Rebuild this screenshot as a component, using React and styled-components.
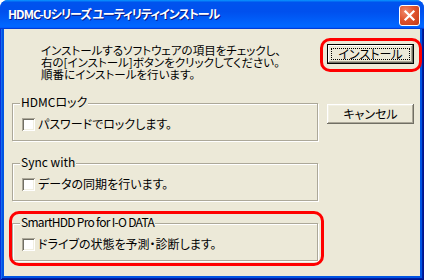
import React from "react";
import styled, { createGlobalStyle, css } from "styled-components";

const GlobalStyle = createGlobalStyle`
  html, body { margin: 0; padding: 0; background: #ffffff; }
  body { font-family: "Noto Sans CJK JP", "Noto Sans", sans-serif; }
`;

const uiFont = css`
  font-family: "Noto Sans CJK JP", "Noto Sans", sans-serif;
  font-size: 12px;
  line-height: 12px;
  font-feature-settings: "palt";
  color: #000;
`;

const Window = styled.div`
  width: 424px;
  height: 280px;
  display: flex;
  flex-direction: column;
  border-radius: 8px 8px 0 0;
  overflow: hidden;
  background: #0054e3;
`;

const TitleBar = styled.div`
  height: 29px;
  box-sizing: border-box;
  padding: 2px 4px 0 8px;
  display: flex;
  align-items: center;
  justify-content: space-between;
  background: linear-gradient(
    180deg,
    #0997ff,
    #0053ee 8%,
    #0050ee 40%,
    #0066ff 88%,
    #0066ff 93%,
    #005bff 95%,
    #003dd7 96%,
    #003dd7
  );
`;

const Title = styled.span`
  font-family: "Noto Sans CJK JP", sans-serif;
  font-weight: 700;
  font-size: 12px;
  line-height: 14px;
  letter-spacing: -1px;
  font-feature-settings: "palt";
  color: #fff;
  text-shadow: 1px 1px 0 #0a1883;
  margin-top: -3px;
`;

const CloseButton = styled.div`
  width: 21px;
  height: 21px;
  box-sizing: border-box;
  border: 1px solid #fff;
  border-radius: 3px;
  display: flex;
  align-items: center;
  justify-content: center;
  background: radial-gradient(circle at 30% 30%, #f08a6c 0%, #e0542f 45%, #c23a15 100%);
`;

const Frame = styled.div`
  flex: 1;
  display: flex;
  padding: 0 4px 4px;
  background: #0054e3;
  box-shadow: inset 1px 0 #0831d9, inset -1px -1px #00138c, inset 2px 0 #166aee, inset -2px -2px #001ea0;
`;

const Client = styled.div`
  flex: 1;
  display: flex;
  gap: 9px;
  padding-left: 8px;
  background: #ece9d8;
`;

const LeftColumn = styled.div`
  width: 306px;
  display: flex;
  flex-direction: column;
  gap: 22px;
  padding-top: 15px;
`;

const Description = styled.div`
  ${uiFont};
  font-size: 11.5px;
  margin-left: 29px;
  margin-bottom: 1px;
  display: flex;
  flex-direction: column;
  white-space: nowrap;
`;

const GroupBox = styled.div`
  position: relative;
  height: 38px;
  box-sizing: border-box;
  border: 1px solid #aca899;
  box-shadow: 1px 1px 0 #fff, inset 1px 1px 0 #fff;
  padding: 14px 0 0 9px;
  display: flex;
  align-items: flex-start;
`;

const Legend = styled.span`
  ${uiFont};
  position: absolute;
  top: -8px;
  left: 7px;
  padding: 0 1px;
  background: #ece9d8;
  white-space: nowrap;
  letter-spacing: ${(p) => (p.$tight ? "-0.7px" : "0")};
`;

const CheckRow = styled.label`
  display: flex;
  align-items: center;
  gap: 3px;
  ${uiFont};
  white-space: nowrap;
`;

const CheckBox = styled.span`
  width: 13px;
  height: 13px;
  flex: none;
  box-sizing: border-box;
  background: #fff;
  box-shadow: inset 1px 1px #aca899, inset -1px -1px #fff, inset 2px 2px #716f64, inset -2px -2px #f1efe2;
`;

const CheckText = styled.span`
  margin-top: -1px;
`;

const RightColumn = styled.div`
  display: flex;
  flex-direction: column;
  gap: 40px;
  padding-top: 15px;
`;

const Highlight = styled.div`
  position: relative;
  &::after {
    content: "";
    position: absolute;
    inset: ${(p) => p.$inset};
    border: 3px solid #ff0000;
    border-radius: 10px;
    pointer-events: none;
  }
`;

const Button = styled.button`
  position: relative;
  width: 87px;
  height: 20px;
  box-sizing: border-box;
  padding: 0;
  border: none;
  background: #ece9d8;
  ${uiFont};
  display: flex;
  align-items: center;
  justify-content: center;
  box-shadow: inset -1px -1px #716f64, inset 1px 1px #fff, inset -2px -2px #aca899, inset 2px 2px #f1efe2;
  ${(p) =>
    p.$default &&
    css`
      box-shadow: inset 0 0 0 1px #000, inset -2px -2px #716f64, inset 2px 2px #fff, inset -3px -3px #aca899;
      &::before {
        content: "";
        position: absolute;
        inset: 4px;
        border: 1px dotted #000;
      }
    `}
`;

const descriptionLines = [
  "インストールするソフトウェアの項目をチェックし、",
  "右の[インストール]ボタンをクリックしてください。",
  "順番にインストールを行います。",
];

const groups = [
  { title: "HDMCロック", label: "パスワードでロックします。" },
  { title: "Sync with", label: "データの同期を行います。" },
  {
    title: "SmartHDD Pro for I-O DATA",
    label: "ドライブの状態を予測・診断します。",
    highlight: true,
    tight: true,
  },
];

function Group({ title, label, tight }) {
  return (
    <GroupBox>
      <Legend $tight={tight}>{title}</Legend>
      <CheckRow>
        <CheckBox />
        <CheckText>{label}</CheckText>
      </CheckRow>
    </GroupBox>
  );
}

export default function App() {
  return (
    <>
      <GlobalStyle />
      <Window>
        <TitleBar>
          <Title>HDMC-Uシリーズ ユーティリティインストール</Title>
          <CloseButton>
            <svg width="13" height="13" viewBox="0 0 13 13">
              <path d="M2.5 2.5 L10.5 10.5 M10.5 2.5 L2.5 10.5" stroke="#fff" strokeWidth="2.2" strokeLinecap="square" />
            </svg>
          </CloseButton>
        </TitleBar>
        <Frame>
          <Client>
            <LeftColumn>
              <Description>
                {descriptionLines.map((l) => (
                  <span key={l}>{l}</span>
                ))}
              </Description>
              {groups.map((g) =>
                g.highlight ? (
                  <Highlight key={g.title} $inset="-12px -6px -5px -3px">
                    <Group {...g} />
                  </Highlight>
                ) : (
                  <Group key={g.title} {...g} />
                )
              )}
            </LeftColumn>
            <RightColumn>
              <Highlight $inset="-6px -8px -8px -7px">
                <Button $default>インストール</Button>
              </Highlight>
              <Button>キャンセル</Button>
            </RightColumn>
          </Client>
        </Frame>
      </Window>
    </>
  );
}
